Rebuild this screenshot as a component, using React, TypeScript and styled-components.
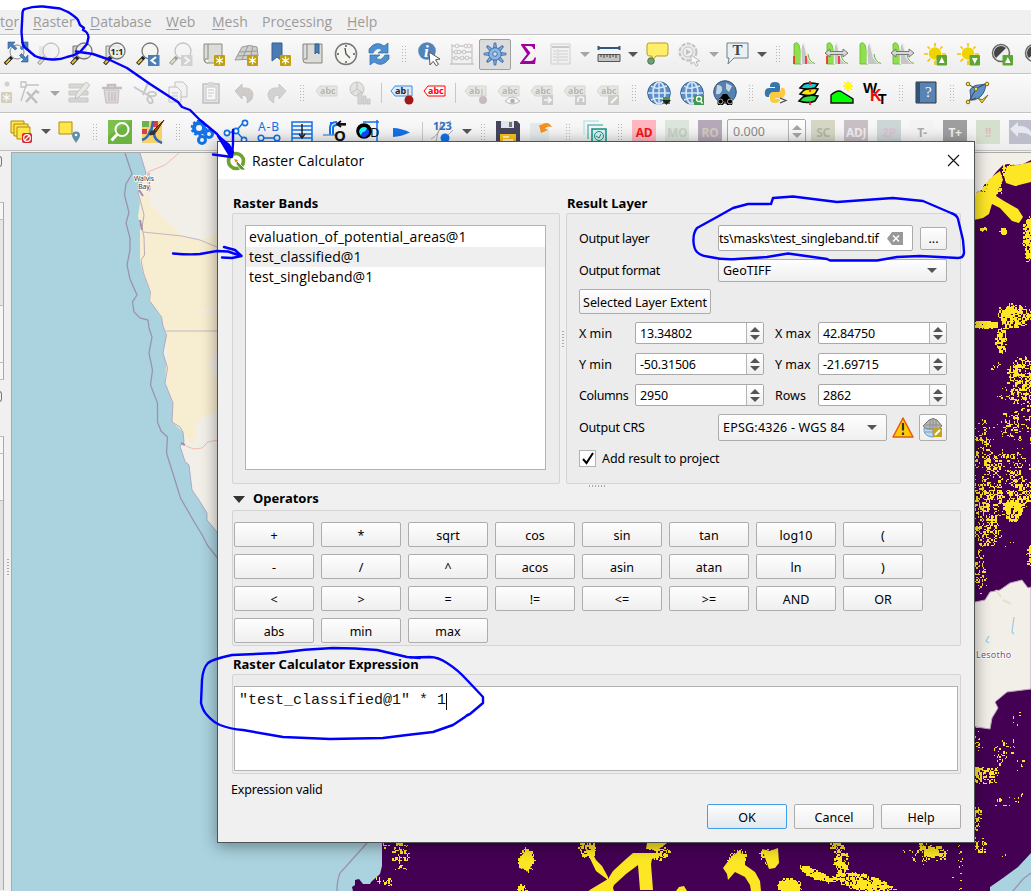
import React from "react";
import styled, { createGlobalStyle, css } from "styled-components";

const UI = `"Noto Sans", "Open Sans", sans-serif`;

const GlobalStyle = createGlobalStyle`
  * { box-sizing: border-box; }
  html, body { margin: 0; padding: 0; overflow: hidden; }
  body { font-family: ${UI}; font-size: 12.5px; color: #000; }
`;

/* ---------- main window ---------- */

const Window = styled.div`
  position: relative;
  display: flex;
  flex-direction: column;
  width: 1031px;
  height: 891px;
  overflow: hidden;
  background: #f0f0f0;
`;

const TopEdge = styled.div`
  flex: 0 0 10px;
  background: #fff;
`;

const MenuBar = styled.nav`
  display: flex;
  flex: 0 0 24px;
  align-items: center;
  background: #f0f0f0;
  font-family: "Open Sans", sans-serif;
  font-size: 14px;
  color: #9b9b9b;
`;

const MenuItem = styled.span<{ $w: number }>`
  flex: 0 0 ${(p) => p.$w}px;
  white-space: nowrap;
  line-height: 24px;
  u { text-underline-offset: 2px; }
`;

const ToolBar = styled.div<{ $start: number; $h: number }>`
  display: flex;
  flex: 0 0 ${(p) => p.$h}px;
  align-items: center;
  padding-left: ${(p) => Math.max(p.$start, 0)}px;
  background: linear-gradient(#fafafa, #ededed);
  border-top: 1px solid #c3c3c3;
  box-shadow: inset 0 1px #fff;
  overflow: hidden;
  & > :first-child { margin-left: ${(p) => Math.min(p.$start, 0)}px; }
`;

const Slot = styled.div<{ $w?: number; $dim?: boolean }>`
  display: flex;
  flex: 0 0 ${(p) => p.$w ?? 33}px;
  height: 27px;
  align-items: center;
  justify-content: center;
  opacity: ${(p) => (p.$dim ? 0.4 : 1)};
  filter: ${(p) => (p.$dim ? "saturate(0.35)" : "none")};
`;

const Art = styled.svg`
  flex: none;
  display: block;
  overflow: visible;
`;

const Pressed = styled.div`
  display: flex;
  align-items: center;
  justify-content: center;
  flex: none;
  width: 32px;
  height: 31px;
  border: 1px solid #a0a0a0;
  border-radius: 2px;
  background: #dcdcdc;
`;

const Grip = styled.div`
  width: 6px;
  height: 18px;
  background-image: radial-gradient(circle, #b5b5b5 0.7px, transparent 1px);
  background-size: 3px 3px;
`;

const Rule = styled.div`
  width: 1px;
  height: 20px;
  background: #c8c8c8;
`;

const Caret = styled.div<{ $light?: boolean; $up?: boolean; $s?: number }>`
  width: 0;
  height: 0;
  border-left: ${(p) => p.$s ?? 5}px solid transparent;
  border-right: ${(p) => p.$s ?? 5}px solid transparent;
  ${(p) =>
    p.$up
      ? css`border-bottom: ${p.$s ?? 5}px solid ${p.$light ? "#a5a5a5" : "#555"};`
      : css`border-top: ${p.$s ?? 5}px solid ${p.$light ? "#a5a5a5" : "#555"};`}
`;

const FoldCaret = styled(Caret)`
  border-top-width: 7px;
  border-top-color: #333;
`;

const Tile = styled.div<{ $bg: string; $fg: string }>`
  width: 24px;
  height: 24px;
  background: ${(p) => p.$bg};
  color: ${(p) => p.$fg};
  font: bold 12px/25px ${UI};
  text-align: center;
  letter-spacing: -0.3px;
`;

const ToolSpin = styled.div`
  display: flex;
  width: 79px;
  height: 25px;
  border: 1px solid #a8a8a8;
  border-radius: 2px;
  background: #f6f6f6;
  color: #8a8a8a;
  font-size: 12.5px;
  line-height: 24px;
  padding-left: 5px;
`;

const SpinArrows = styled.div`
  display: flex;
  flex-direction: column;
  align-items: center;
  justify-content: center;
  gap: 3px;
  width: 17px;
  margin-left: auto;
  border-left: 1px solid #b4b4b4;
  background: linear-gradient(#fff, #efefef);
`;

const Workspace = styled.div`
  display: flex;
  flex: 1;
  min-height: 0;
  border-top: 1px solid #c0c0c0;
`;

const Dock = styled.aside`
  display: flex;
  flex-direction: column;
  flex: 0 0 4px;
`;

const DockKnob = styled.div<{ $top: number; $bottom: number }>`
  width: 3px;
  height: 11px;
  margin: ${(p) => p.$top}px 0 ${(p) => p.$bottom}px -1px;
  border: 1px solid #777;
  border-left: 0;
  border-radius: 0 3px 3px 0;
  flex: none;
`;

const DockCell = styled.div<{ $h: number; $bg?: string; $last?: boolean }>`
  flex: 0 0 ${(p) => p.$h}px;
  border-top: 1px solid #bdbdbd;
  border-right: 1px solid #a9a9a9;
  border-bottom: ${(p) => (p.$last ? "1px solid #bdbdbd" : "0")};
  background: ${(p) => p.$bg ?? "#f6f6f6"};
`;

const Splitter = styled.div`
  display: flex;
  flex: 0 0 7px;
  align-items: flex-start;
  justify-content: center;
  padding-top: 407px;
`;

const Dots = styled.div<{ $across?: boolean }>`
  width: ${(p) => (p.$across ? 17 : 2)}px;
  height: ${(p) => (p.$across ? 2 : 17)}px;
  background-image: radial-gradient(circle, #a8a8a8 0.7px, transparent 1px);
  background-size: ${(p) => (p.$across ? "3px 2px" : "2px 3px")};
`;

const MapCanvas = styled.div`
  flex: 1;
  margin-top: 1px;
  border-top: 1px solid #aaa;
  border-left: 1px solid #aaa;
  overflow: hidden;
  svg { display: block; }
`;

/* ---------- dialog ---------- */

const Dialog = styled.section`
  position: absolute;
  left: 217px;
  top: 141px;
  width: 758px;
  height: 702px;
  display: flex;
  flex-direction: column;
  border: 1px solid #4f5555;
  background: #f0f0f0;
  box-shadow: 0 3px 15px rgba(0, 0, 0, 0.4);
`;

const TitleBar = styled.header`
  display: flex;
  flex: 0 0 37px;
  align-items: center;
  background: #fff;
  padding: 0 14px 0 8px;
  font-family: "Open Sans", sans-serif;
  font-size: 14px;
`;

const TitleText = styled.span`
  margin-left: 6px;
  margin-right: auto;
  letter-spacing: 0.07px;
`;

const Body = styled.div`
  display: flex;
  flex-direction: column;
  flex: 1;
  padding: 14px 13px 12px 14px;
`;

const Heading = styled.h2<{ $mt?: number }>`
  margin: ${(p) => p.$mt ?? 0}px 0 0 1px;
  height: 20px;
  flex: none;
  font: bold 13px/20px ${UI};
  letter-spacing: 0.02px;
`;

const Columns = styled.div`
  display: flex;
  height: 291px;
`;

const Frame = styled.div`
  border: 1px solid #d4d4d4;
  border-radius: 2px;
  background: #ececec;
`;

const BandsColumn = styled.div`
  width: 328px;
`;

const BandsFrame = styled(Frame)`
  height: 271px;
  padding: 11px 13px 13px 12px;
`;

const BandList = styled.ul`
  margin: 0;
  padding: 1px 0;
  height: 245px;
  list-style: none;
  background: #fff;
  border: 1px solid #b2b2b2;
`;

const Band = styled.li<{ $current?: boolean }>`
  height: 20px;
  padding-left: 3px;
  font-family: "Open Sans", sans-serif;
  font-size: 14px;
  line-height: 20px;
  letter-spacing: 0.11px;
  background: ${(p) => (p.$current ? "#efefef" : "transparent")};
`;

const Gutter = styled.div`
  display: flex;
  width: 6px;
  justify-content: center;
  padding-top: 137px;
`;

const ResultColumn = styled.div`
  width: 395px;
`;

const ResultFrame = styled(Frame)`
  display: flex;
  flex-direction: column;
  height: 271px;
  padding: 11px 13px 0 12px;
`;

const Row = styled.div<{ $h: number; $gap: number }>`
  display: flex;
  align-items: center;
  flex: none;
  height: ${(p) => p.$h}px;
  margin-bottom: ${(p) => p.$gap}px;
`;

const Label = styled.label<{ $w: number; $ls?: number }>`
  flex: 0 0 ${(p) => p.$w}px;
  white-space: nowrap;
  letter-spacing: ${(p) => p.$ls ?? 0}px;
`;

const raised = css`
  border: 1px solid #adadad;
  border-radius: 2px;
  background: linear-gradient(#fefefe, #efefef);
`;

const PathField = styled.div`
  display: flex;
  align-items: center;
  width: 195px;
  height: 26px;
  margin-right: 7px;
  border: 1px solid #ababab;
  border-radius: 2px;
  background: #fff;
  letter-spacing: -0.2px;
  white-space: nowrap;
  padding-right: 9px;
  svg { margin-left: auto; }
`;

const Button = styled.button<{ $w: number; $h?: number; $primary?: boolean; $ls?: number }>`
  ${raised}
  display: flex;
  align-items: center;
  justify-content: center;
  width: ${(p) => p.$w}px;
  height: ${(p) => p.$h ?? 25}px;
  padding: 1px 0 0;
  font: 12.5px ${UI};
  letter-spacing: ${(p) => p.$ls ?? 0}px;
  white-space: nowrap;
  color: #000;
  ${(p) =>
    p.$primary &&
    css`
      border-color: #3f9fe8;
      background: linear-gradient(#fdfdfe, #e2e8ee);
    `}
`;

const Combo = styled.div<{ $w: number; $h: number; $ls?: number }>`
  ${raised}
  display: flex;
  align-items: center;
  justify-content: space-between;
  width: ${(p) => p.$w}px;
  height: ${(p) => p.$h}px;
  padding: 0 9px 0 4px;
  letter-spacing: ${(p) => p.$ls ?? 0}px;
`;

const Spin = styled.div<{ $mr?: number }>`
  display: flex;
  flex: 0 0 129px;
  height: 22px;
  margin-right: ${(p) => p.$mr ?? 0}px;
  padding-left: 4px;
  border: 1px solid #a9a9a9;
  border-radius: 2px;
  background: #fff;
  line-height: 21px;
  letter-spacing: -0.18px;
`;

const CheckBox = styled.span`
  display: flex;
  align-items: center;
  justify-content: center;
  width: 17px;
  height: 17px;
  margin-right: 6px;
  border: 1px solid #b2b2b2;
  background: #fff;
`;

const HSplit = styled.div`
  height: 7px;
  flex: none;
  padding: 1px 0 0 356px;
`;

const FoldHeading = styled(Heading)`
  display: flex;
  align-items: flex-start;
  gap: 8px;
  height: 19px;
  line-height: 15px;
  ${FoldCaret} { margin-top: 5px; }
`;

const OperatorFrame = styled(Frame)`
  display: grid;
  grid-template-columns: repeat(8, 80px);
  grid-auto-rows: 25px;
  gap: 7px;
  height: 136px;
  padding: 11px 0 0 1px;
`;

const ExpressionFrame = styled(Frame)`
  height: 100px;
  padding: 11px 2px 2px 1px;
`;

const ExpressionEdit = styled.div`
  display: flex;
  height: 85px;
  padding: 6px 4px;
  background: #fff;
  border: 1px solid #b2b2b2;
  font: 15px/16px "Liberation Mono", monospace;
  color: #111;
  white-space: pre;
`;

const TextCursor = styled.span`
  width: 1px;
  height: 17px;
  background: #000;
`;

const Status = styled.div`
  height: 30px;
  margin-left: -1px;
  padding-top: 7px;
  letter-spacing: -0.18px;
`;

const Actions = styled.div`
  display: flex;
  justify-content: flex-end;
  gap: 7px;
`;

const Ink = styled.svg`
  position: absolute;
  inset: 0;
  pointer-events: none;
`;

/* ---------- icons ---------- */

const Icon = ({ children, size = 24 }: { children: React.ReactNode; size?: number }) => (
  <Art width={size} height={size} viewBox="0 0 24 24" fill="none">
    {children}
  </Art>
);

const Lens = ({ children }: { children?: React.ReactNode }) => (
  <>
    <path d="M8 15 1.500 22" stroke="#222" strokeWidth="4" />
    <path d="M6 17.200 2 21.300" stroke="#f0c440" strokeWidth="2" />
    <circle cx="14" cy="9" r="8" fill="#f4f4f2" fillOpacity=".8" stroke="#777" strokeWidth="1.300" />
    {children}
  </>
);

const StarBadge = () => (
  <>
    <rect x="12" y="13" width="11" height="11" rx="1" fill="#c29f0c" />
    <path d="M17.500 14.500v8M14 16.500l7 4M21 16.500l-7 4" stroke="#fff" strokeWidth="1.300" />
    <circle cx="17.500" cy="18.500" r="1.600" fill="#fff" />
  </>
);

const Tag = ({ fill = "#d8d3b4", stroke = "#a8a48c", ink = "#555", text = "abc" }) => (
  <>
    <path d="M1 10 5 5h17v10H5z" fill={fill} stroke={stroke} />
    <text x="5" y="13" fontFamily="Noto Sans" fontWeight="700" fontSize="9" fill={ink}>
      {text}
    </text>
  </>
);

const Globe = () => (
  <>
    <circle cx="12" cy="12" r="11.300" fill="#5b8fc9" stroke="#355f92" />
    <path d="M4 5q4 3 8 2t8-2M1 12h22M4 19q8-4 16 0M12 1v22" stroke="#d7e6f5" strokeWidth="1.500" />
    <ellipse cx="12" cy="12" rx="6" ry="11" stroke="#d7e6f5" strokeWidth="1.700" />
  </>
);

const Histogram = ({ red, arrows }: { red?: boolean; arrows?: boolean }) => (
  <>
    <path d="M2 22V2q3-3 5 1l2 7 1 12z" fill="#8ee04c" stroke="#63b52f" strokeWidth=".8" />
    <path d="M8 22 9.500 5q1.500-7 3.500-1l3 12 3 4 3 2z" fill="#c6c6c6" />
    <path d="M9.500 22 9 6q1-7 3.500-2l3 12 3 4 4 1.500" stroke="#fff" strokeWidth=".8" />
    <path d="M16 12q1 8 7 9.500" stroke="#6bb13a" />
    {red && <path d="M2 14v8M14 14v8" stroke="#f22" strokeWidth="1.600" />}
    {arrows && (
      <path d="m0 11 5-4v2.500h13V7l5 4-5 4v-2.500H5V15z" fill="#d9d9d9" stroke="#777" />
    )}
  </>
);

const UpBadge = ({ up }: { up?: boolean }) => (
  <>
    <rect x="12.500" y="13" width="10.500" height="10.500" rx="1" fill="#5ca632" />
    <path d={up ? "m15 21 2.800-6 2.800 6z" : "m15 16 2.800 6 2.800-6z"} fill="#fff" />
  </>
);

const Sun = ({ up }: { up?: boolean }) => (
  <>
    <path d="M11 1v22M0 12h22M3.500 4.500l15 15M18.500 4.500l-15 15" stroke="#f2c400" strokeWidth="1.700" />
    <circle cx="11" cy="11.500" r="7" fill="#fafafa" />
    <circle cx="11" cy="11.500" r="6.200" fill="#eed400" />
    <UpBadge up={up} />
  </>
);

const ICONS: Record<string, React.ReactNode> = {
  zoomFull: (
    <>
      <path d="M8 15 1 22" stroke="#222" strokeWidth="3.600" />
      <path d="M6 17 2 21.300" stroke="#f0c440" strokeWidth="1.800" />
      <circle cx="13" cy="10" r="7" fill="#f4f4f2" stroke="#888" />
      <path d="M4 0h7L9 2.500l4 4L11 8 7 4 4 7zM24 0v7l-2.500-3-3.500 4-2-2 4-3.500L17 0zM24 20h-7l2.500-2.500-4-4 2-2 4 4L24 13z" fill="#4d80b8" stroke="#2d5d92" strokeWidth=".6" />
    </>
  ),
  zoomSelection: (
    <>
      <path d="M2 4h12v14H2z" fill="#d8d49a" />
      <Lens />
    </>
  ),
  zoomLayer: (
    <>
      <path d="M3 4h13v12H3z" fill="#ccc" stroke="#777" />
      <Lens />
    </>
  ),
  zoomNative: (
    <>
      <path d="M3 4h13v12H3z" fill="#ddd" stroke="#888" />
      <Lens>
        <text x="7.500" y="12.500" fontSize="9" fontWeight="700" fontFamily="Noto Sans" fill="#222">
          1:1
        </text>
      </Lens>
    </>
  ),
  zoomLast: (
    <>
      <Lens />
      <rect x="12" y="13" width="11.500" height="11" fill="#4c7eb6" />
      <path d="m20 15-4.500 3.500L20 22" stroke="#fff" strokeWidth="2" />
    </>
  ),
  zoomNext: (
    <>
      <Lens />
      <rect x="12" y="13" width="11.500" height="11" fill="#9aa4b0" />
      <path d="m15.500 15 4.500 3.500-4.500 3.500" stroke="#fff" strokeWidth="2" />
    </>
  ),
  newMap: (
    <>
      <path d="M2 2h18v19H6q-4 0-4-3z" fill="#dcdcd8" stroke="#8b8b85" />
      <path d="M6 2v15H3q-1 4 3 4" fill="#f5f5f2" stroke="#8b8b85" />
      <StarBadge />
    </>
  ),
  newMesh: (
    <>
      <path d="M7 5q7-3 15 0l1 9-5 3-18 1z" fill="#cfcfcb" stroke="#999" />
      <path d="m4 10 18-1M2 14l20-1M13 4 7 17M18 4l-3 13" stroke="#999" />
      <StarBadge />
    </>
  ),
  newBookmark: (
    <>
      <path d="M4 1h10v18l-5-4-5 4z" fill="#4a7cb2" stroke="#315e91" />
      <StarBadge />
    </>
  ),
  bookmarks: (
    <>
      <path d="M2 2h19v19H5q-3 0-3-3z" fill="#dcdcd8" stroke="#85857f" />
      <path d="M6 2v15H3" stroke="#85857f" />
      <path d="M14 2h4v10l-2-2-2 2z" fill="#4a7cb2" stroke="#315e91" />
    </>
  ),
  clock: (
    <>
      <circle cx="12" cy="12" r="10.500" fill="#f5f6f2" stroke="#777" strokeWidth="1.500" />
      <path d="M12 3v2M12 19v2M3 12h2M19 12h2M11 6l1 6 4 4" stroke="#555" strokeWidth="1.400" />
    </>
  ),
  refresh: (
    <>
      <path d="M2 11V7q7-9 15-3l4-3v10H11l4-3q-5-4-9 3z" fill="#4d8fd0" stroke="#2c6cac" strokeWidth=".7" />
      <path d="M22 13v4q-7 9-15 3l-4 3V13h10l-4 3q5 4 9-3z" fill="#4d8fd0" stroke="#2c6cac" strokeWidth=".7" />
    </>
  ),
  identify: (
    <>
      <circle cx="10" cy="9" r="8.800" fill="#5084ba" />
      <text x="7" y="15" fontSize="17" fontWeight="700" fontStyle="italic" fontFamily="Liberation Serif" fill="#fff">
        i
      </text>
      <path d="M12 10l11 7-4.500.8 3 4.500-2.300 1.500-3-4.500L13 23z" fill="#fff" stroke="#555" />
    </>
  ),
  abacus: (
    <>
      <path d="M2 2v20M22 2v20M0 22h24M2 4h20M2 10h20M2 16h20" stroke="#888" strokeWidth="1.300" />
      {[[7, 4], [16, 4], [19, 4], [6, 10], [9, 10], [14, 10], [6, 16], [12, 16], [17, 16]].map(([x, y], i) => (
        <circle key={i} cx={x} cy={y} r="1.900" fill="#eee" stroke={i < 3 ? "#c66" : "#777"} />
      ))}
    </>
  ),
  gear: (
    <>
      {[0, 45, 90, 135, 180, 225, 270, 315].map((a) => (
        <path key={a} transform={`rotate(${a} 12 12)`} d="M10.600 6 11.200 1h1.600l.6 5z" fill="#8db5e2" stroke="#3e74ae" />
      ))}
      <circle cx="12" cy="12" r="6.200" fill="#8db5e2" stroke="#3e74ae" />
      <circle cx="12" cy="12" r="2.300" fill="#ddd" stroke="#3e74ae" />
    </>
  ),
  sigma: <path d="M5 2h14v5h-1.500q-.5-3-4-3H9l5.500 7L8 19h6.500q3 0 4-3.500H20L19 22H4v-1l7-9-6-9z" fill="#a000a0" />,
  table: (
    <>
      <path d="M2 2h19v20H2z" fill="#eee" stroke="#999" />
      <path d="M3 5h17" stroke="#888" strokeWidth="2" />
      <path d="M4 9h4M4 12h4M4 15h4M4 18h4M10 9h9M10 12h9M10 15h9M10 18h9M9 7v14" stroke="#999" />
    </>
  ),
  ruler: (
    <>
      <path d="M2 6h20M1.500 4v4M22.500 4v4" stroke="#2f587f" strokeWidth="2" />
      <path d="M1 12.500h22v7H1z" fill="#c4c4c4" stroke="#555" />
      <path d="M4 12v3M7 12v4M10 12v3M13 12v4M16 12v3M19 12v4" stroke="#444" />
    </>
  ),
  balloon: (
    <>
      <path d="M4 1h17q2 0 2 2v8q0 3-2 3H11l-4 5V14H4q-2 0-2-3V3q0-2 2-2z" fill="#ffee68" stroke="#bf9b1d" />
      <circle cx="6" cy="19" r="3.300" fill="#6da070" stroke="#487c50" />
    </>
  ),
  gearRun: (
    <>
      <circle cx="10" cy="10" r="8.500" fill="#ddd" stroke="#777" strokeWidth="2" strokeDasharray="4 1.500" />
      <circle cx="10" cy="10" r="5" fill="#eee" stroke="#777" />
      <path d="m8 7 5 3-5 3z" fill="#777" />
      <path d="m13 13 9 6-4 .6 2 3.500-2 1-2-4-3 2z" fill="#fff" stroke="#666" />
    </>
  ),
  textNote: (
    <>
      <path d="M1 1h21v15H8l-6 6 1-6H1z" fill="#eaf1f4" stroke="#71808a" />
      <text x="6.500" y="13" fontFamily="Liberation Serif" fontWeight="700" fontSize="15" fill="#444">
        T
      </text>
    </>
  ),
  histA: <Histogram red />,
  histB: <Histogram red arrows />,
  histC: <Histogram />,
  histD: <Histogram arrows />,
  sunUp: <Sun up />,
  sunDown: <Sun />,
  contrastUp: (
    <>
      <circle cx="11" cy="11" r="8.500" fill="#eee" stroke="#666" strokeWidth="1.500" />
      <path d="M16 6A7 7 0 1 0 6 16z" fill="#444" />
      <UpBadge up />
    </>
  ),
  partial: (
    <>
      <circle cx="17" cy="3" r="2.500" fill="#999" />
      <g transform="translate(-1 -2)">
        <StarBadge />
      </g>
    </>
  ),
  vertex: (
    <>
      <path d="M2 20 7 4h13M2 1h5v5H2z" stroke="#777" strokeWidth="1.300" />
      <path d="m7 21 10-11 3 2M8 11l10 11" stroke="#777" strokeWidth="2.500" />
    </>
  ),
  pencilLines: (
    <>
      <path d="M2 3h19v4H2zM2 10h19v4H2zM2 17h19v4H2z" fill="#b7ad90" stroke="#8f8876" />
      <path d="m8 18 1-5L19 1l4 3-11 12z" fill="#ddd5bf" stroke="#777" />
    </>
  ),
  trash: (
    <>
      <path d="M2 7h20M8 7V4h7v3" stroke="#8f6464" strokeWidth="2.500" />
      <path d="M4 9h15l-1 13H6z" fill="#d3aaaa" stroke="#957070" />
      <path d="M9 11v9M12 11v9M15 11v9" stroke="#875f5f" />
    </>
  ),
  scissors: (
    <>
      <path d="M1 6 18 16M15 2 10 14" stroke="#888" strokeWidth="2" />
      <ellipse cx="19" cy="13" rx="4" ry="2.200" stroke="#888" strokeWidth="1.800" />
      <ellipse cx="17" cy="19" rx="2.200" ry="3.500" transform="rotate(-30 17 19)" stroke="#888" strokeWidth="1.800" />
    </>
  ),
  copy: (
    <>
      <path d="M9 1h8l4 4v11H9z" fill="#eee" stroke="#777" />
      <path d="M3 6h8l4 4v11H3z" fill="#f5f5f5" stroke="#777" />
      <path d="M6 12h6M6 15h6M6 18h6" stroke="#888" />
    </>
  ),
  paste: (
    <>
      <path d="M4 3h16v19H4z" fill="#ccc" stroke="#777" strokeWidth="1.500" />
      <path d="M7 6h10v13H7z" fill="#fff" stroke="#888" />
      <path d="M9 1h6v4H9z" fill="#aaa" />
      <path d="M9 9h6M9 12h6M9 15h4" stroke="#888" />
    </>
  ),
  undo: <path d="m3 10 7-7v4q11-1 11 7 0 5-6 8 2-8-5-8v4z" fill="#a79078" stroke="#8d7a66" />,
  redo: <path d="m21 10-7-7v4Q3 6 3 14q0 5 6 8-2-8 5-8v4z" fill="#9aa79a" stroke="#808c80" />,
  tag: <Tag />,
  tagPin: (
    <>
      <Tag fill="#d9ecff" stroke="#3d8be0" ink="#222" text="ab" />
      <circle cx="19" cy="19" r="4.500" fill="#a01818" />
      <path d="M18 15V8" stroke="#888" strokeWidth="1.500" />
    </>
  ),
  tagRed: <Tag fill="#fff" stroke="#f00" ink="#f00" />,
  tagPinGrey: (
    <>
      <Tag text="ab" />
      <circle cx="19" cy="19" r="4" fill="#a06a6a" />
      <path d="M18 15V8" stroke="#888" strokeWidth="1.500" />
    </>
  ),
  tagEye: (
    <>
      <Tag />
      <path d="M8 20q7-8 15 0-8 6-15 0z" fill="#fff" stroke="#666" />
      <circle cx="15.500" cy="20" r="2.300" fill="#555" />
    </>
  ),
  tagMove: (
    <>
      <Tag />
      <path d="M12 14h11v10H12z" fill="#8f958f" />
      <path d="M14 19h7m-3-3 3 3-3 3" stroke="#fff" strokeWidth="1.700" />
    </>
  ),
  tagRotate: (
    <>
      <Tag />
      <path d="M12 14h11v10H12z" fill="#8f958f" />
      <path d="M15 21q-1-5 3-5t2 5" stroke="#fff" strokeWidth="1.700" />
    </>
  ),
  tagEdit: (
    <>
      <Tag />
      <path d="M12 14h11v10H12z" fill="#9f9678" />
      <path d="m15 22 6-6" stroke="#fff" strokeWidth="2" />
    </>
  ),
  diagram: (
    <>
      <circle cx="9" cy="8" r="7" fill="#bcd0ae" stroke="#777" />
      <path d="M9 8V1M9 8l6 4M9 8l-6 4" stroke="#777" />
      <path d="M10 12h4v11h-4zM15 15h3v8h-3zM19 18h3v5h-3z" fill="#c4a2a2" stroke="#888" />
    </>
  ),
  globeAdd: (
    <>
      <Globe />
      <path d="M16 16h7v7h-7z" fill="#469450" />
      <path d="M15 19h9l-4.500 5z" fill="#222" />
    </>
  ),
  globeFind: (
    <>
      <Globe />
      <path d="M14 14h10v10H14z" fill="#3f9950" />
      <circle cx="19" cy="18" r="2.500" stroke="#fff" strokeWidth="1.300" />
      <path d="m20.500 20 2 2.500" stroke="#fff" strokeWidth="1.500" />
    </>
  ),
  globeBinoculars: (
    <>
      <circle cx="12" cy="11" r="11.300" fill="#5580b2" stroke="#345478" />
      <path d="M4 4q6 0 5 5t-6 4M13 2l6 3-3 6-3-3zM9 12l4 3" fill="#c6d5e3" />
      <path d="M5 24q-2-5 3-8l2-3h4l2 3q5 3 3 8h-5l-2-4-2 4z" fill="#000" />
      <circle cx="7.500" cy="20.500" r="2.500" stroke="#aaa" />
      <circle cx="17" cy="20.500" r="2.500" stroke="#aaa" />
    </>
  ),
  python: (
    <>
      <path d="M6 5q0-4 5-4t5 4v4q0 3-3 3H8q-3 0-3 4H3q-3-1-2-6 1-3 4-3h6V6H6z" fill="#3875aa" />
      <path d="M17 7h2q3 1 2 6-1 4-4 4h-6v1h5q0 4-5 4t-5-4v-4q0-3 3-3h5q3 0 3-4z" fill="#fdca3e" />
      <path d="m16 17 6 2.500-6 2.500" stroke="#444" strokeWidth="1.200" />
    </>
  ),
  layers: (
    <>
      <path d="M6 16q6-3 15-1l-3 5q-7 3-16 0z" fill="#2fdb46" stroke="#000" strokeWidth="1.500" />
      <path d="M7 9q6-3 14-1l-3 5q-6 3-15 0z" fill="#ffe600" stroke="#000" strokeWidth="1.500" />
      <path d="M7 3q6-2 14 0l-3 4q-8 2-15 0z" fill="#20c4cc" stroke="#000" strokeWidth="1.500" />
      <path d="M13 0v4M13 8v3M13 20v4" stroke="#e22" strokeWidth="1.800" />
    </>
  ),
  hill: (
    <>
      <path d="M1 21V14q7-6 11-3l11 7v4H1z" fill="#0f0" stroke="#111" strokeWidth="1.400" />
      <path d="M18 0v11M13 5h10M14 1l8 8M22 1l-8 8" stroke="#fd0" />
      <circle cx="18" cy="5" r="3.500" fill="#ff0" />
    </>
  ),
  wkt: (
    <g fontFamily="Liberation Sans" fontWeight="700">
      <text x="0" y="12" fontSize="15" fill="#000">W</text>
      <text x="7" y="20" fontSize="16" fill="#f00">K</text>
      <text x="15" y="23" fontSize="14" fill="#000">T</text>
    </g>
  ),
  book: (
    <>
      <path d="M2 1h20v21H2z" fill="#5784b5" stroke="#333" />
      <path d="M2 1h4v21H2z" fill="#345171" />
      <text x="11" y="16" fontFamily="Liberation Serif" fontSize="15" fill="#fff">
        ?
      </text>
    </>
  ),
  topology: (
    <>
      <path d="M5 9q3-5 9-5l7-1q-1 9-6 13-5 4-9 3z" fill="#5d91ca" stroke="#355d8a" />
      <path d="m3 3 8 5 9-5M4 20l7-12M3 20l8-3" stroke="#444" />
      {[[3, 3], [22, 3], [11, 8], [3, 21]].map(([x, y], i) => (
        <circle key={i} cx={x} cy={y} r="1.800" fill="#ffe34e" stroke="#7d6b19" />
      ))}
      <path d="m13 17 4 2 6-5-6 8z" fill="#ffe34e" stroke="#7d6b19" />
    </>
  ),
  selectLayers: (
    <>
      <path d="M1 1h13v12H1z" fill="#ffe64a" stroke="#b28a0a" />
      <path d="M4 4h14v12H4z" fill="#ffe64a" stroke="#b28a0a" />
      <path d="M7 7h13v12H7z" fill="#ffe64a" stroke="#b28a0a" />
      <rect x="12" y="13" width="10" height="10" rx="2" fill="#d8262c" />
      <circle cx="17" cy="18" r="3.300" stroke="#fff" strokeWidth="1.300" />
      <path d="m15 20 4-4" stroke="#fff" strokeWidth="1.300" />
    </>
  ),
  selectPin: (
    <>
      <path d="M1 2h13v12H1z" fill="#ffe64a" stroke="#b28a0a" />
      <path d="M18 23q-4-6-4-7.500a4 4 0 0 1 8 0Q22 17 18 23z" fill="#5f8fa8" />
      <circle cx="18" cy="15" r="1.300" fill="#fff" />
    </>
  ),
  greenSearch: (
    <>
      <path d="M0 0h24v24H0z" fill="#6cb33f" />
      <path d="M0 0h24L0 16z" fill="#8bcc60" opacity=".5" />
      <circle cx="14" cy="9.500" r="6.500" stroke="#fff" strokeWidth="2" />
      <path d="m9.500 14-6 6.500" stroke="#fff" strokeWidth="3" />
    </>
  ),
  osm: (
    <>
      <path d="M1 1h20v22H1z" fill="#f6d26a" />
      <path d="M1 1h7v6H1z" fill="#6fb14c" />
      <path d="M11 1h6v6h-6zM1 9h5v5H1z" fill="#d3414b" />
      <path d="M1 20q6-2 8-9l4 2q0 7 8 10M12 1l-2 11" stroke="#2d68c4" strokeWidth="2.500" />
      <path d="M23 0 13 10l2 2z" fill="#8b4a1c" stroke="#4d2508" />
      <path d="M8 15q0-4 5-5l2 2q-1 4-7 3z" fill="#333" />
    </>
  ),
  gears: (
    <>
      <circle cx="8" cy="8" r="5" stroke="#1271e8" strokeWidth="4" />
      <circle cx="8" cy="8" r="7.300" stroke="#1271e8" strokeWidth="2" strokeDasharray="2.600 2" />
      <circle cx="18" cy="14" r="3.500" stroke="#1271e8" strokeWidth="3" />
      <circle cx="11" cy="20" r="3.500" stroke="#1271e8" strokeWidth="3" />
    </>
  ),
  network: (
    <>
      <path d="m4 13 8-2 7-8M12 11l8 9" stroke="#1271e8" strokeWidth="1.500" />
      {[[3, 13], [21, 3], [12, 11], [20, 20]].map(([x, y], i) => (
        <circle key={i} cx={x} cy={y} r="2.600" fill="#fff" stroke="#1271e8" strokeWidth="1.600" />
      ))}
    </>
  ),
  ab: (
    <>
      <text x="1" y="10.500" fontFamily="Noto Sans" fontSize="12" letterSpacing=".8" fill="#1271e8">
        A-B
      </text>
      <path d="M6 18h12" stroke="#1271e8" strokeWidth="1.500" />
      <circle cx="4" cy="18" r="2.800" stroke="#1271e8" strokeWidth="1.500" />
      <circle cx="20" cy="18" r="2.800" stroke="#1271e8" strokeWidth="1.500" />
    </>
  ),
  listDown: (
    <>
      <path d="M2 2h20v20H2zM2 6h20M2 10h20M2 14h20M2 18h20" stroke="#1271e8" strokeWidth="1.500" />
      <path d="M12 4v14m-3-4 3 4 3-4" stroke="#222" strokeWidth="1.500" />
    </>
  ),
  queryBox: (
    <>
      <path d="M7 15V8q0-6 7-6M10 15V8q0-3 4-3h9M8 2v3" stroke="#1271e8" strokeWidth="2" />
      <path d="M0 15h12" stroke="#5c98e0" strokeWidth="1.500" />
      <path d="M23 4h-8M18 1l-4 3 4 3" stroke="#111" strokeWidth="1.800" />
      <text x="11" y="21" fontFamily="Noto Sans" fontWeight="700" fontSize="15" fill="#111">
        Q
      </text>
    </>
  ),
  dimension: (
    <>
      <path d="M7 2h16M7 22h16M21 0v24" stroke="#1271e8" strokeWidth="1.500" />
      <circle cx="8" cy="11" r="7.800" fill="#000" />
      <path d="M3 12a5 5 0 0 1 8-4q-1 4-3 4t-3 4z" fill="#1ff" />
      <path d="M12 9a5 5 0 0 1-7 7q1-4 3-4z" fill="#14f" />
      <text x="14" y="16.500" fontFamily="Noto Sans" fontSize="13" fill="#111">
        D
      </text>
    </>
  ),
  play: <path d="M4 8q8 0 17 4.500-9 4-17 4.500z" fill="#1271e8" />,
  numbers: (
    <>
      <path d="M5 22Q7 3 20 1M0 19Q9 15 10 1M14 22q2-8 8-12" stroke="#aaa" />
      <text x="2" y="10" fontFamily="Noto Sans" fontWeight="700" fontSize="11" fill="#2d6cc0">
        123
      </text>
      <circle cx="14" cy="18" r="4.500" fill="#1271e8" />
    </>
  ),
  save: (
    <>
      <path d="M0 1h21l3 3v20H0z" fill="#45455e" />
      <path d="M5 1h13v7H5z" fill="#dfe6ea" />
      <path d="M13 2h3v5h-3z" fill="#777" />
      <path d="M4 14h16v10H4z" fill="#f8c316" />
      <path d="M7 17h6M7 20h10" stroke="#fff" strokeWidth="1.300" />
    </>
  ),
  revert: (
    <>
      <path d="M1 3h19v21H1z" fill="#e3e9ea" />
      <path d="m10 5 2 8 7-3-3-1.500q2-3 7-1.500-4-7-11-2z" fill="#f59019" />
    </>
  ),
  copyLayers: (
    <>
      <path d="M1 15V1h15" stroke="#bfe6ea" strokeWidth="1.500" />
      <path d="M5 19V5h15" stroke="#66bcbc" strokeWidth="1.500" />
      <path d="M9 9h14v14H9z" fill="#d8f1ee" stroke="#159080" strokeWidth="1.500" />
      <circle cx="16" cy="16" r="4.500" stroke="#159080" />
      <path d="m13 16 3 2 2-4" stroke="#159080" />
    </>
  ),
  back: (
    <path d="m1 9 8-7v4q13-1 15 12-5-6-15-5v4z" fill="#e6e8ef" />
  ),
};

type Tool = { k: string; w?: number; dim?: boolean; bg?: string; fg?: string };

const dim = (k: string, w?: number): Tool => ({ k, w, dim: true });
const t = (k: string, w?: number): Tool => ({ k, w });

const NAVIGATION: Tool[] = [
  t("zoomFull"), dim("zoomSelection"), t("zoomLayer"), t("zoomNative"), t("zoomLast"), dim("zoomNext"),
  t("newMap"), t("newMesh"), t("newBookmark"), t("bookmarks"), t("clock"), t("refresh"),
  t("|:", 17), t("identify"), dim("abacus"), t("[gear]"), t("sigma"), dim("table"), t("v-", 15),
  t("ruler"), t("v", 15), t("balloon"), dim("gearRun"), t("v-", 15), t("textNote"), t("v", 14),
  t("|:", 19), t("histA"), t("histB"), t("histC"), t("histD"), t("sunUp"), t("sunDown"),
  t("contrastUp"), t("contrastUp"),
];

const EDITING: Tool[] = [
  dim("partial", 26), dim("vertex"), t("v-", 15), dim("pencilLines"), dim("trash"), dim("scissors"),
  dim("copy"), dim("paste"), dim("undo"), dim("redo"), t("|:", 17), dim("tag"), dim("diagram"),
  t("|", 9), t("tagPin"), t("tagRed"), t("|", 8), dim("tagPinGrey"), dim("tagEye"), dim("tagMove"),
  dim("tagRotate"), dim("tagEdit"), t("|:", 18), t("globeAdd"), t("globeFind"), t("globeBinoculars"),
  t("|:", 18), t("python"), t("layers"), t("hill"), t("wkt"), t("|:", 18), t("book"), t("|:", 18),
  t("topology"),
];

const tile = (k: string, bg: string, fg: string): Tool => ({ k, bg, fg });

const PLUGINS: Tool[] = [
  t("selectLayers"), t("v", 15), t("selectPin"), t("|:", 17), t("greenSearch"), t("osm"), t("|:", 17),
  t("gears"), t("network"), t("ab"), t("listDown"), t("queryBox"), t("dimension"), t("play"),
  t("|", 9), t("numbers"), t("v", 15), t("|:", 17), t("save"), t("revert"), t("|:", 21),
  t("copyLayers"), t("|:", 16), tile("AD", "#ffb6c1", "#f01818"), tile("MO", "#dce5dc", "#c6cfc6"),
  tile("RO", "#b5a9b9", "#d3cbbd"), t("spin", 80), tile("SC", "#d5d7c4", "#b1b8a6"),
  tile("ADJ", "#c8bfc4", "#f0ecee"), tile("2P", "#cdd6d6", "#d8c3cf"), tile("T-", "#f3f3f3", "#adadad"),
  tile("T+", "#9e9e9e", "#f0f0f0"), tile("!!", "#d5dfce", "#dcbdb4"), tile("<", "#bdbdcb", "#fff"),
];

function ToolItem({ k, w, dim: faded, bg, fg }: Tool) {
  if (k === "|:") return <Slot $w={w}><Grip /></Slot>;
  if (k === "|") return <Slot $w={w}><Rule /></Slot>;
  if (k === "v" || k === "v-") return <Slot $w={w}><Caret $light={k === "v-"} /></Slot>;
  if (k === "[gear]") return <Slot><Pressed><Icon>{ICONS.gear}</Icon></Pressed></Slot>;
  if (k === "spin")
    return (
      <Slot $w={w}>
        <ToolSpin>
          0.000
          <SpinArrows><Caret $light $up /><Caret $light /></SpinArrows>
        </ToolSpin>
      </Slot>
    );
  if (bg)
    return (
      <Slot><Tile $bg={bg} $fg={fg!}>{k === "<" ? <Icon>{ICONS.back}</Icon> : k}</Tile></Slot>
    );
  return <Slot $w={w} $dim={faded}><Icon>{ICONS[k]}</Icon></Slot>;
}

/* ---------- map ---------- */

const CELL = 1.34;

function hash(x: number, y: number) {
  let h = (x * 374761393 + y * 668265263) | 0;
  h = Math.imul(h ^ (h >>> 13), 1274126177);
  return ((h ^ (h >>> 16)) >>> 0) / 4294967296;
}

function smooth(x: number, y: number) {
  const ix = Math.floor(x), iy = Math.floor(y), fx = x - ix, fy = y - iy;
  const a = hash(ix, iy), b = hash(ix + 1, iy), c = hash(ix, iy + 1), d = hash(ix + 1, iy + 1);
  return (a * (1 - fx) + b * fx) * (1 - fy) + (c * (1 - fx) + d * fx) * fy;
}

/* centre x, centre y, radius x, radius y, density, rotation */
type Patch = [number, number, number, number, number, number?];

const PATCHES: Patch[] = [
  [1029, 238, 8, 26, 0.7], [984, 230, 10, 4, 0.5], [1003, 231, 4, 4, 0.95],
  [1014, 316, 20, 14, 0.68], [984, 324, 16, 4, 1], [1001, 340, 7, 16, 0.7],
  [996, 368, 14, 7, 0.42], [1022, 374, 18, 22, 0.62], [1020, 395, 26, 14, 0.5],
  [1018, 425, 28, 28, 0.42], [980, 440, 14, 26, 0.45], [1000, 466, 40, 22, 0.46],
  [985, 497, 24, 26, 0.55], [1020, 490, 16, 22, 0.55], [985, 530, 20, 22, 0.55],
  [1012, 510, 12, 12, 0.75], [980, 570, 9, 28, 0.45], [1005, 545, 16, 10, 0.3],
  [1029, 555, 4, 12, 0.6], [1002, 750, 16, 18, 0.42], [1018, 720, 14, 26, 0.28],
  [984, 775, 18, 12, 0.62], [978, 745, 7, 22, 0.35], [1008, 800, 26, 7, 0.4, -14],
  [976, 820, 7, 26, 0.48], [1005, 825, 8, 26, 0.25, 20], [1024, 770, 12, 14, 0.3],
  [400, 853, 12, 20, 0.52], [385, 845, 6, 5, 0.6], [386, 881, 13, 6, 0.5, 15], [412, 870, 14, 22, 0.15],
  [587, 849, 9, 10, 0.75], [522, 888, 8, 6, 0.5],
  [840, 856, 9, 26, 0.65, -12], [862, 882, 36, 10, 0.75, 14], [925, 852, 26, 13, 0.5], [931, 852, 8, 6, 0.95],
  [958, 862, 8, 28, 0.35], [1000, 862, 14, 22, 0.2, 30], [789, 886, 13, 9, 0.9],
  [980, 845, 8, 10, 0.5], [816, 874, 20, 5, 0.95, 25], [526, 860, 9, 14, 0.75],
  [658, 853, 12, 8, 0.6], [737, 858, 12, 10, 0.6], [768, 856, 12, 9, 0.6],
  [1014, 172, 18, 14, 0.6], [990, 186, 14, 12, 0.7],
];

function specklePath() {
  let d = "";
  for (let j = 0; j * CELL < 740; j++) {
    for (let i = 0; i * CELL < 680; i++) {
      const x = 352 + i * CELL, y = 152 + j * CELL;
      if (x < 970 && y < 838) continue;
      let p = 0;
      for (const [cx, cy, rx, ry, density, rot = 0] of PATCHES) {
        const a = (-rot * Math.PI) / 180, dx = x - cx, dy = y - cy;
        const u = (dx * Math.cos(a) - dy * Math.sin(a)) / rx;
        const v = (dx * Math.sin(a) + dy * Math.cos(a)) / ry;
        const r = u * u + v * v;
        if (r < 1) p = Math.max(p, density * Math.min(1, (1 - r) * 2.2 * density + 0.2));
      }
      if (p === 0) continue;
      const n = smooth(i / 3.2, j / 3.2);
      if (hash(i + 911, j + 77) * 0.6 + n * 0.5 < p * 0.95) {
        d += `M${x.toFixed(2)} ${y.toFixed(2)}h${CELL}v${CELL}h-${CELL}z`;
      }
    }
  }
  return d;
}

const SPECKLES = specklePath();

const COAST =
  "M140 153 146 173 141 184 138 192 141.500 205 144 215 142 228 144 237 144.500 255 141 260 143.500 273 150.500 292 149.500 300.500 161.500 317 163 326 166.500 335 163 353 167.500 368 165 383 173 403 172 422 180 427 183 432 184 442 180 446 185 461.500 189 465 192 490 199 500 207 513 207 520 217 532";

const OFFSHORE =
  "M125 153 132 174 126 184 124.500 195 129 212.500 126 223 130 238 130 250 127 265 130 279 137 295 132.500 302 134 312 140 318 148 320 149 328 152 337 149 353 152.500 370 150.500 385 157.500 403 157.500 422 161 431 167.500 437 166.500 453 176.500 485 180.500 498 194 521.500 202.500 535.500 207.500 545.500 217 557.500";

function MapView() {
  return (
    <svg width="1019" height="738" viewBox="12 153 1019 738" fill="none">
      <path d="M12 153h1019v738H12z" fill="#aad3df" />
      <path d={`${COAST}H240V153z`} fill="#f2efe9" />
      <path d="M143 195l7-2 0 12 8 7 15 15 9 9 18 4 11-4 6-2v176l-5 4-10 3-7 8 2 8-4 11-5-3-5-9-11-10 1-19-8-20 2-30-1-18-5-18-12-17 1-8-7-19-3-12 0-18 0-18-2-9 2-13-2-10z" fill="#f7edd1" />
      <path d="M217 352q-6 6-7 14l4 10 3 4zM195 313l22-6v3l-12 2z" fill="#f2efe9" />
      <path d={COAST} stroke="#a79ab8" strokeWidth=".8" />
      <path d={OFFSHORE} stroke="#9c92b0" strokeWidth="1.300" />
      <path d="M143 232 182 236 200 240 217 247M166 331h51" stroke="#c6b4c4" />
      <path d="M179 153 165 165 148 172 147 178 150 192M186 446l8 3 8-1 6-6 10-2" stroke="#f2b3a8" strokeWidth=".9" />
      <path d="m149 173 1 17" stroke="#e87b7b" />
      <path d="m139 190 4 6M140 220l2 10M181 443l4 2" stroke="#a08fb0" strokeWidth="2" />
      <g fontFamily="Noto Sans" fontSize="6.800" fill="#333" stroke="#fff" strokeWidth="1.600" paintOrder="stroke" textAnchor="middle">
        <text x="144" y="181">Walvis</text>
        <text x="144" y="189">Bay</text>
      </g>
      <path d="M367 843 350 862 340 873Q337 880 337 891" stroke="#9c92b0" strokeWidth="1.300" />

      <path d="M382 835V866l-2 8-9 8-1 2h-7l-4-5-4 1v5l-3 2 1 4H1031V153H970V835z" fill="#440154" />
      <path d={SPECKLES} fill="#fde725" shapeRendering="crispEdges" />
      <g fill="#fde725">
        <path d="m1007 166 10-1 14-3v20l-16 4-9-3-2-7zM974 195l5-4 6 1 5-14 10-7 3 9-4 8-3 8 8 5 14 8 5 8-4 6-7-2-12-13-8-4-3 10-6 4-9 2z" />
        <path d="m519 859 7-9 6 2 0 13-5 7-2-3-6-1z" />
        <path d="M585 848l7 4 4 8 6 6 6 11v3l4 5-24 6 20-12 5-8 13-12 7-6h28l-3 4-6 2-1 5 2 26h-13l-2-25-12 9-12 11-3 8h-16l5-8 8-5-12-9z" />
        <path d="M589 891q10-6 19-11l4 5 2 6zM647 843l-1 6h13l8-6z" />
        <path d="M723 868l9-12 6-4 7 3v10l10 7 5 9 1 10h-10l-1-6-5-8-10-5-7 8-1-6z" />
        <path d="M762 849l8 2 8-3 1 15-4 5-6 1zM676 891l3-4 5-1 3 5z" />
      </g>
      <path d="M970 153h61v7l-8 4-8 1-7-1-5 1-6 6-5 6-8 8-2 5-5 2-3 8h-4z" fill="#f2efe9" />
      <path d="M970 603l15-3 5-8 10-2 10-7 12-3 6 8 3-1V689l-24 3-12 10 3 6-6 10-2 11-20-3z" fill="#f2efe9" stroke="#b9a0b5" strokeWidth="1" />
      <path d="m1014 617-2 15 2 2M989 636l-3 5 3 2" stroke="#9bcbe0" strokeWidth="1.200" />
      <path d="m996 590 5 7M1003 600l8 4" stroke="#dfe5c8" strokeWidth="2" />
      <text x="976" y="658" fontFamily="Noto Sans" fontSize="9" letterSpacing=".25" fill="#7a5580" stroke="#fff" strokeWidth="1.500" paintOrder="stroke">
        Lesotho
      </text>
      <path d="m1031 853-13 14-15 11-13 9v4h41z" fill="#aad3df" />
      <path d="m1031 873-8 6-10 12" stroke="#9c92b0" strokeWidth="1.300" />
    </svg>
  );
}

/* ---------- dialog content ---------- */

const OPERATORS = [
  "+", "*", "sqrt", "cos", "sin", "tan", "log10", "(",
  "-", "/", "^", "acos", "asin", "atan", "ln", ")",
  "<", ">", "=", "!=", "<=", ">=", "AND", "OR",
  "abs", "min", "max",
];

const NumberBox = ({ value, mr }: { value: string; mr?: number }) => (
  <Spin $mr={mr}>
    {value}
    <SpinArrows><Caret $up /><Caret /></SpinArrows>
  </Spin>
);

function RasterCalculator() {
  return (
    <Dialog>
      <TitleBar>
        <Art width="20" height="20" viewBox="0 0 20 20" fill="none">
          <circle cx="10" cy="10" r="7.500" stroke="#6fa32b" strokeWidth="3.600" />
          <path d="m11 10 8 8v1h-4l-5-6z" fill="#589632" stroke="#fff" strokeWidth=".8" />
          <path d="m8 8 4 1-2 3z" fill="#ee7913" />
        </Art>
        <TitleText>Raster Calculator</TitleText>
        <Art width="13" height="13" viewBox="0 0 13 13">
          <path d="m1 1 11 11M12 1 1 12" stroke="#111" strokeWidth="1.100" />
        </Art>
      </TitleBar>
      <Body>
        <Columns>
          <BandsColumn>
            <Heading>Raster Bands</Heading>
            <BandsFrame>
              <BandList>
                <Band>evaluation_of_potential_areas@1</Band>
                <Band $current>test_classified@1</Band>
                <Band>test_singleband@1</Band>
              </BandList>
            </BandsFrame>
          </BandsColumn>
          <Gutter><Dots /></Gutter>
          <ResultColumn>
            <Heading>Result Layer</Heading>
            <ResultFrame>
              <Row $h={26} $gap={8}>
                <Label $w={139} $ls={-0.3}>Output layer</Label>
                <PathField>
                  ts\masks\test_singleband.tif
                  <Art width="16" height="13" viewBox="0 0 16 13">
                    <path d="M0 6.500 5 0h11v13H5z" fill="#999" />
                    <path d="m6 3.500 6 6m0-6-6 6" stroke="#fff" strokeWidth="1.500" />
                  </Art>
                </PathField>
                <Button $w={27} $h={23}>...</Button>
              </Row>
              <Row $h={23} $gap={7}>
                <Label $w={139} $ls={-0.35}>Output format</Label>
                <Combo $w={229} $h={23}>GeoTIFF<Caret /></Combo>
              </Row>
              <Row $h={25} $gap={8}>
                <Button $w={132} $ls={-0.08}>Selected Layer Extent</Button>
              </Row>
              <Row $h={22} $gap={9}>
                <Label $w={56}>X min</Label>
                <NumberBox value="13.34802" mr={11} />
                <Label $w={43}>X max</Label>
                <NumberBox value="42.84750" />
              </Row>
              <Row $h={22} $gap={9}>
                <Label $w={56}>Y min</Label>
                <NumberBox value="-50.31506" mr={11} />
                <Label $w={43}>Y max</Label>
                <NumberBox value="-21.69715" />
              </Row>
              <Row $h={22} $gap={8}>
                <Label $w={56} $ls={-0.35}>Columns</Label>
                <NumberBox value="2950" mr={11} />
                <Label $w={43}>Rows</Label>
                <NumberBox value="2862" />
              </Row>
              <Row $h={27} $gap={9}>
                <Label $w={139} $ls={-0.2}>Output CRS</Label>
                <Combo $w={169} $h={27} $ls={0.22}>EPSG:4326 - WGS 84<Caret /></Combo>
                <Slot $w={32}>
                  <Art width="22" height="21" viewBox="0 0 22 21">
                    <path d="M11 1 21 20H1z" fill="#fc0" stroke="#e8590c" strokeWidth="1.500" strokeLinejoin="round" />
                    <path d="M11 6v7.500M11 15.500v2.500" stroke="#333" strokeWidth="2.200" />
                  </Art>
                </Slot>
                <Button $w={28} $h={27}>
                  <Art width="20" height="20" viewBox="0 0 20 20" fill="none">
                    <path d="M1 10Q0 18 9 19q8 0 9-9z" fill="#b8d8f0" stroke="#6a9cc4" />
                    <path d="M0 8 6 2q4-3 8 0l5 6-4 3H4z" fill="#b5b5b5" stroke="#777" />
                    <path d="M2 7h16M7 2v9M13 2v9M10 1v18M2 14h15" stroke="#888" strokeWidth=".8" />
                    <path d="M10 10h9v9h-9z" fill="#c6a317" />
                    <path d="m12 17 5-5" stroke="#fff" strokeWidth="2" />
                  </Art>
                </Button>
              </Row>
              <Row $h={17} $gap={0}>
                <CheckBox>
                  <Art width="12" height="13" viewBox="0 0 12 13" fill="none">
                    <path d="m1 7 3.500 4L11 1" stroke="#000" strokeWidth="2" />
                  </Art>
                </CheckBox>
                <Label $w={130} $ls={-0.1}>Add result to project</Label>
              </Row>
            </ResultFrame>
          </ResultColumn>
        </Columns>
        <HSplit><Dots $across /></HSplit>
        <FoldHeading><FoldCaret $s={6} />Operators</FoldHeading>
        <OperatorFrame>
          {OPERATORS.map((op) => (
            <Button key={op} $w={80}>{op}</Button>
          ))}
        </OperatorFrame>
        <Heading $mt={8}>Raster Calculator Expression</Heading>
        <ExpressionFrame>
          <ExpressionEdit>{`"test_classified@1" * 1`}<TextCursor /></ExpressionEdit>
        </ExpressionFrame>
        <Status>Expression valid</Status>
        <Actions>
          <Button $w={80} $primary>OK</Button>
          <Button $w={80}>Cancel</Button>
          <Button $w={80}>Help</Button>
        </Actions>
      </Body>
    </Dialog>
  );
}

/* Hand-drawn pen marks over the window */
function PenMarks() {
  return (
    <Ink width="1031" height="891" viewBox="0 0 1031 891" fill="none" stroke="#0000fb" strokeWidth="2.400" strokeLinecap="round" strokeLinejoin="round">
      <path d="M30 51.500Q23 47 22.500 43L21.500 32 22.500 13Q23 9 25 9 33 6 43 6.500L60 8.500 68 12Q76 17 78 20L80 25 84 28 83 30Q88 32 88.500 37L87 44 80 52Q74 56 67 57 60 60 52 59.500 42 59 35 56L29 51" />
      <path d="M76 51.500 93 54 110 60 127 68 150 84 167 95 178 102 182 107 190 110 200 120 217 134 230 151" />
      <path d="M218 136 229 145 233 152 230 156z" fill="#0000fb" />
      <path d="M233 130V143L232 157 213 154.500" />
      <path d="M173 253.500Q190 255 200 254L217 251 228 251.500 241 256M224 247 235 250 241.500 256 232 258 222 257.500" />
      <path d="M769 204 748 204 733 208 717 217 697 228Q693 233 693.500 242 694 249 697 252 701 256 710 257 723 260 737 259L767 257 788 253.500 806 256 827 259 830 260.500H877L897 257 920 256 958 258Q964 258 964 252L963 240 958 219Q957 215 951 213L923 201 893 198 837 202 793 196.500 773 198 771 204" />
      <path d="M420 658 407 657 377 650Q355 648 333 648 305 649 277 653L232 655Q213 659 208 663 203 668 202 680L201 703Q203 711 207 715 213 722 220 725 230 729 243 730L283 737 330 739 383 738 407 735 433 732 453 725 465 717Q467 715 470 714L483 703 483 697 467 680Q458 670 447 663 438 657 430 657L410 657.500" />
    </Ink>
  );
}

const MENUS: [number, string, string, string][] = [
  [33, "t", "o", "r"], [57, "", "R", "aster"], [76, "", "D", "atabase"], [46, "", "W", "eb"],
  [50, "", "M", "esh"], [85, "Pro", "c", "essing"], [40, "", "H", "elp"],
];

export default function App() {
  return (
    <Window>
      <GlobalStyle />
      <TopEdge />
      <MenuBar>
        {MENUS.map(([w, a, key, b]) => (
          <MenuItem key={a + key + b} $w={w}>{a}<u>{key}</u>{b}</MenuItem>
        ))}
      </MenuBar>
      <ToolBar $start={-0.5} $h={39}>{NAVIGATION.map((i, n) => <ToolItem key={n} {...i} />)}</ToolBar>
      <ToolBar $start={-11.5} $h={39}>{EDITING.map((i, n) => <ToolItem key={n} {...i} />)}</ToolBar>
      <ToolBar $start={5.5} $h={38}>{PLUGINS.map((i, n) => <ToolItem key={n} {...i} />)}</ToolBar>
      <Workspace>
        <Dock>
          <DockKnob $top={5} $bottom={35} />
          <DockCell $h={17} />
          <DockCell $h={86} $bg="#e6e6e6" />
          <DockCell $h={57} />
          <DockCell $h={18} $last />
          <DockKnob $top={11} $bottom={34} />
          <DockCell $h={17} />
          <DockCell $h={47} />
          <DockCell $h={390} $bg="#e2e2e2" />
        </Dock>
        <Splitter><Dots /></Splitter>
        <MapCanvas><MapView /></MapCanvas>
      </Workspace>
      <RasterCalculator />
      <PenMarks />
    </Window>
  );
}
